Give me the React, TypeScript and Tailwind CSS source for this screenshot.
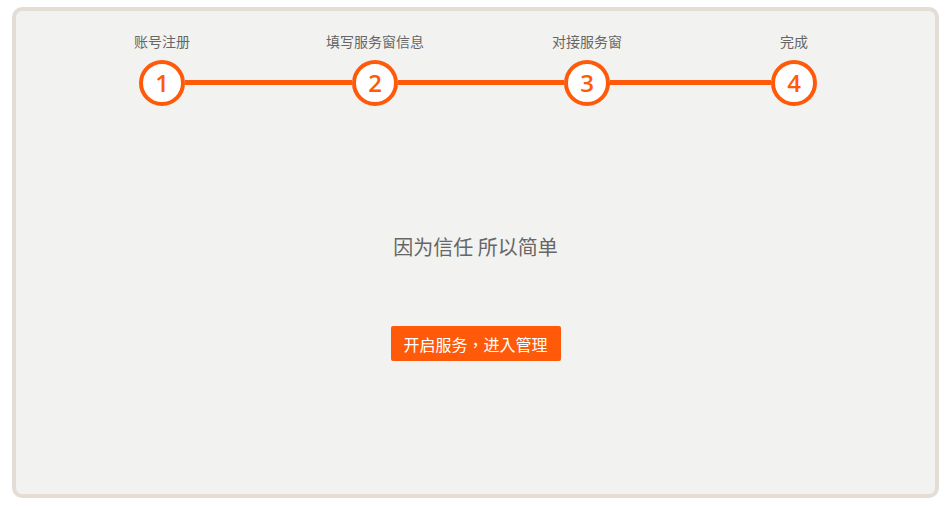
const steps = [
  { n: 1, label: '账号注册' },
  { n: 2, label: '填写服务窗信息' },
  { n: 3, label: '对接服务窗' },
  { n: 4, label: '完成' },
]

const gaps = ['w-[167px]', 'w-[166px]', 'w-[161px]']

export default function App() {
  return (
    <div className="min-h-screen bg-white pt-[7px] pl-[12px]" style={{ fontFamily: '"Noto Sans CJK SC", "Noto Sans", sans-serif' }}>
      <div className="w-[927px] h-[491px] border-4 border-[#e3ddd6] rounded-[10px] bg-[#f2f2f0] flex flex-col">
        {/* Steps */}
        <div className="flex items-end ml-[123px] mt-[20px]">
          {steps.map((s, i) => (
            <div key={s.n} className="flex items-end">
              <div className="flex flex-col items-center w-[46px]">
                <span className="whitespace-nowrap text-[14px] leading-[20px] text-[#666]">{s.label}</span>
                <div className="mt-[9px] w-[46px] h-[46px] rounded-full border-4 border-[#ff5a0a] bg-white flex items-center justify-center">
                  <span className="text-[24px] leading-none font-semibold text-[#ff5a0a] font-['Open_Sans',sans-serif]">{s.n}</span>
                </div>
              </div>
              {i < gaps.length && <div className={`h-[5px] mb-[21px] bg-[#ff5a0a] ${gaps[i]}`} />}
            </div>
          ))}
        </div>

        {/* Body */}
        <h2 className="mt-[127px] text-center text-[20px] leading-[28px] text-[#666]">因为信任 所以简单</h2>
        <div className="mt-[65px] flex justify-center">
          <button className="h-[35px] w-[170px] rounded-[2px] bg-[#ff5a0a] text-white text-[16px] leading-none font-['Noto_Sans_CJK_TC',sans-serif]">
            开启服务，进入管理
          </button>
        </div>
      </div>
    </div>
  )
}
